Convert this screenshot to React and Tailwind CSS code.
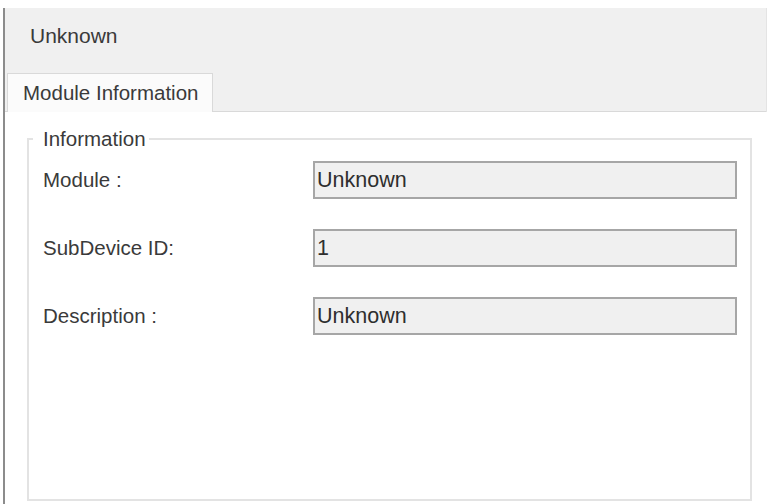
import React from "react";

const fields = [
  { label: "Module :", value: "Unknown" },
  { label: "SubDevice ID:", value: "1" },
  { label: "Description :", value: "Unknown" },
];

export default function App() {
  return (
    <div
      className="w-[770px] h-[504px] bg-white pt-2 pl-[3px] overflow-hidden text-[#3a3a3a]"
      style={{ fontFamily: '"Liberation Sans", Arial, sans-serif' }}
    >
      <div className="h-full border-l-2 border-[#8c8c8c] flex flex-col">
        {/* Header */}
        <div className="w-[762px] h-[104px] bg-[#f0f0f0] border-r border-[#e4e4e4] flex flex-col">
          <div className="h-[65px] pl-[25px] pt-[16px] text-[21px] leading-[24px]">Unknown</div>
          <div className="flex h-[39px]">
            <div className="w-[2px] border-b border-[#d9d9d9]" />
            <div className="w-[206px] bg-[#fbfbfb] border border-b-0 border-[#d9d9d9] flex items-center pl-[15px] text-[20.5px]">
              Module Information
            </div>
            <div className="flex-1 border-b border-[#d9d9d9]" />
          </div>
        </div>

        {/* Content */}
        <div className="flex-1">
          <fieldset className="ml-[22px] mt-[17px] w-[725px] h-[372px] border-2 border-[#e3e3e3] pl-[14px] pr-[13px]">
            <legend className="-ml-[10px] pl-[10px] pr-[3px] text-[20.5px] leading-[20px]">Information</legend>
            <div className="flex flex-col gap-[30px] pt-[12px]">
              {fields.map((f) => (
                <div key={f.label} className="flex items-center h-[38px]">
                  <div className="w-[270px] text-[20.5px]">{f.label}</div>
                  <div className="w-[424px] h-[38px] bg-[#f0f0f0] border-2 border-[#a6a6a6] flex items-center pl-[2px] text-[21.5px] text-[#2e2e2e]">
                    {f.value}
                  </div>
                </div>
              ))}
            </div>
          </fieldset>
        </div>
      </div>
    </div>
  );
}
